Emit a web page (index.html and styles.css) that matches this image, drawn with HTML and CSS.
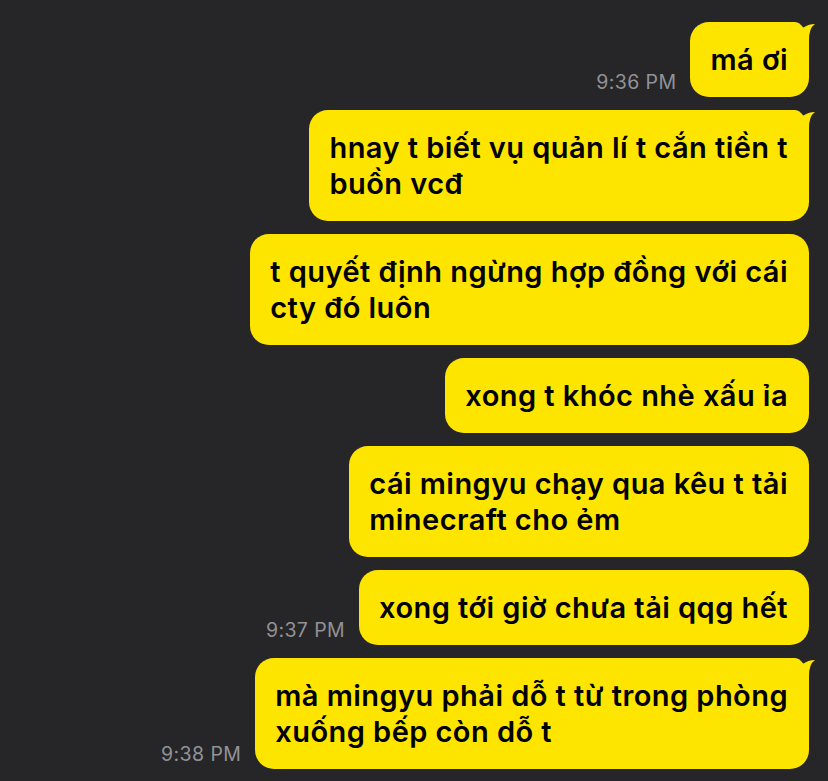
FILE: index.html
```html
<!DOCTYPE html>
<html lang="vi">
<head>
<meta charset="utf-8">
<link rel="stylesheet" href="styles.css">
</head>
<body>
<div class="chat">
  <div class="row">
    <span class="time">9:36 PM</span>
    <div class="bubble tail">má ơi<svg class="tail-svg" viewBox="0 0 24 30" width="24" height="30"><path d="M0,0 L4,0 Q9,0 12,6 Q17,2 24,2 Q18,6 18,18 L18,30 L0,30 Z"/></svg></div>
  </div>
  <div class="row">
    <div class="bubble tail">hnay t biết vụ quản lí t cắn tiền t<br>buồn vcđ<svg class="tail-svg" viewBox="0 0 24 30" width="24" height="30"><path d="M0,0 L4,0 Q9,0 12,6 Q17,2 24,2 Q18,6 18,18 L18,30 L0,30 Z"/></svg></div>
  </div>
  <div class="row">
    <div class="bubble">t quyết định ngừng hợp đồng với cái<br>cty đó luôn</div>
  </div>
  <div class="row">
    <div class="bubble">xong t khóc nhè xấu ỉa</div>
  </div>
  <div class="row">
    <div class="bubble">cái mingyu chạy qua kêu t tải<br>minecraft cho ẻm</div>
  </div>
  <div class="row">
    <span class="time">9:37 PM</span>
    <div class="bubble">xong tới giờ chưa tải qqg hết</div>
  </div>
  <div class="row">
    <span class="time">9:38 PM</span>
    <div class="bubble tail">mà mingyu phải dỗ t từ trong phòng<br>xuống bếp còn dỗ t<svg class="tail-svg" viewBox="0 0 24 30" width="24" height="30"><path d="M0,0 L4,0 Q9,0 12,6 Q17,2 24,2 Q18,6 18,18 L18,30 L0,30 Z"/></svg></div>
  </div>
</div>
</body>
</html>
```
FILE: styles.css
```css
html, body {
  margin: 0;
  padding: 0;
  background: #262628;
  height: 100%;
  overflow: hidden;
}
.chat {
  display: flex;
  flex-direction: column;
  align-items: flex-end;
  gap: 13px;
  padding: 22px 19px 0 0;
  font-family: Inter, "Noto Sans", sans-serif;
}
.row {
  display: flex;
  align-items: flex-end;
  gap: 14px;
}
.time {
  color: #929296;
  font-size: 19.5px;
  line-height: 20px;
  padding-bottom: 5px;
  white-space: nowrap;
  letter-spacing: 0.4px;
}
.bubble {
  position: relative;
  background: #fee500;
  color: #000;
  font-size: 29px;
  font-weight: 600;
  line-height: 36px;
  padding: 19.5px 21px 19.5px 20px;
  border-radius: 19px;
  white-space: nowrap;
  letter-spacing: 0.45px;
}
.tail-svg {
  position: absolute;
  top: 0;
  right: -6px;
  fill: #fee500;
}
```
